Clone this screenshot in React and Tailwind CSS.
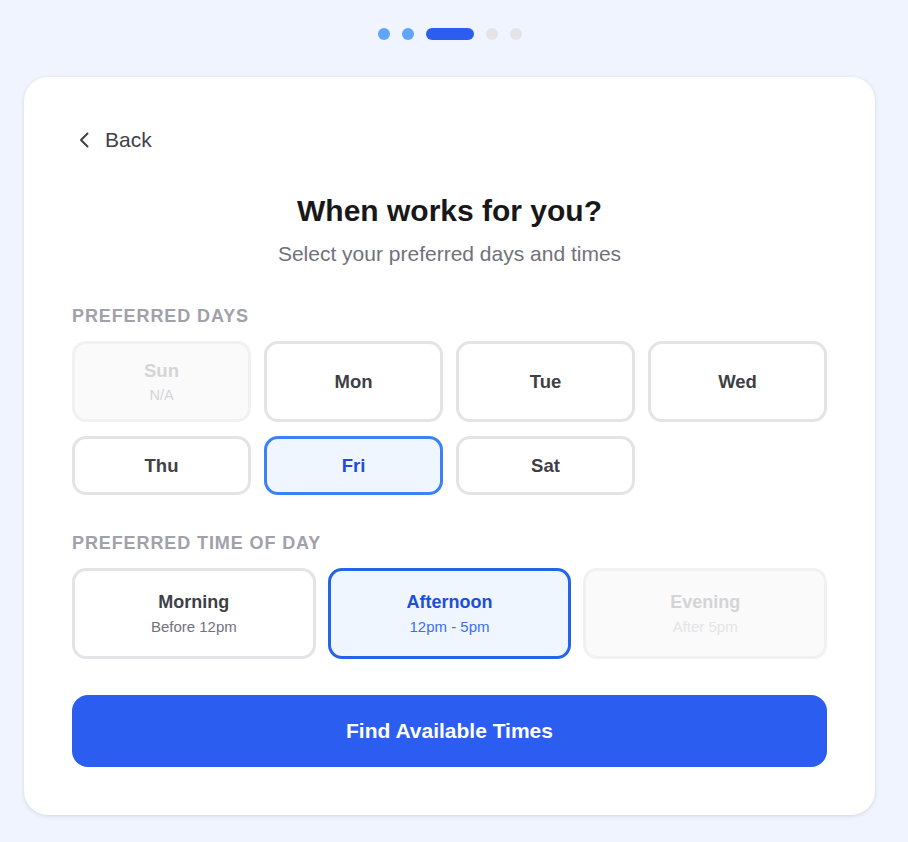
const DAYS = [
  { label: 'Sun', sub: 'N/A', disabled: true },
  { label: 'Mon' },
  { label: 'Tue' },
  { label: 'Wed' },
  { label: 'Thu' },
  { label: 'Fri', selected: true },
  { label: 'Sat' },
]

const TIMES = [
  { label: 'Morning', sub: 'Before 12pm' },
  { label: 'Afternoon', sub: '12pm - 5pm', selected: true },
  { label: 'Evening', sub: 'After 5pm', disabled: true },
]

function Steps() {
  return (
    <div className="flex items-center justify-center gap-3 pt-[28px] pb-[37px]">
      <span className="h-3 w-3 rounded-full bg-[#60a5fa]" />
      <span className="h-3 w-3 rounded-full bg-[#60a5fa]" />
      <span className="h-3 w-12 rounded-full bg-[#2b5ef0]" />
      <span className="h-3 w-3 rounded-full bg-[#e4e4e7]" />
      <span className="h-3 w-3 rounded-full bg-[#e4e4e7]" />
    </div>
  )
}

function DayCell({ day }) {
  const base = 'flex flex-col items-center justify-center rounded-[14px] border-[3px] py-[14px]'
  if (day.disabled) {
    return (
      <div className={`${base} border-[#f1f1f2] bg-[#fafafa]`}>
        <span className="text-[18.5px] font-bold leading-[25px] text-[#d4d4d8]">{day.label}</span>
        <span className="mt-[2px] text-[14.5px] leading-[20px] text-[#d4d4d8]">{day.sub}</span>
      </div>
    )
  }
  if (day.selected) {
    return (
      <div className={`${base} border-[#3b82f6] bg-[#eff6ff]`}>
        <span className="text-[18.5px] font-bold leading-[25px] text-[#1d4ed8]">{day.label}</span>
      </div>
    )
  }
  return (
    <div className={`${base} border-[#e4e4e7] bg-white`}>
      <span className="text-[18.5px] font-bold leading-[25px] text-[#3f3f46]">{day.label}</span>
    </div>
  )
}

function TimeCell({ t }) {
  const base = 'flex flex-col items-center justify-center rounded-[14px] border-[3px] h-[91px]'
  const tone = t.disabled
    ? 'border-[#f1f1f2] bg-[#fafafa]'
    : t.selected
      ? 'border-[#2563eb] bg-[#eff6ff]'
      : 'border-[#e4e4e7] bg-white'
  const title = t.disabled ? 'text-[#d4d4d8]' : t.selected ? 'text-[#1d4ed8]' : 'text-[#3f3f46]'
  const sub = t.disabled ? 'text-[#e4e4e7]' : t.selected ? 'text-[#3b6ef6]' : 'text-[#71717a]'
  return (
    <div className={`${base} ${tone}`}>
      <span className={`text-[18px] font-bold leading-[24px] ${title}`}>{t.label}</span>
      <span className={`mt-[3px] text-[15px] leading-[20px] ${sub}`}>{t.sub}</span>
    </div>
  )
}

export default function App() {
  return (
    <div className="min-h-[842px] bg-[#eff4fe] font-['Liberation_Sans',Arial,sans-serif]">
      <div className="w-[899px] px-6">
        <Steps />
        <div className="rounded-3xl bg-white px-12 pt-12 pb-12 shadow-[0_1px_4px_rgba(0,0,0,0.12)]">
          {/* Back link */}
          <div className="flex h-[30px] items-center text-[21px] text-[#3f3f46]">
            <svg width="12" height="16" viewBox="0 0 12 16" fill="none" className="ml-[6px] mr-[15px]">
              <path d="M9.5 1.5 L3 8 L9.5 14.5" stroke="currentColor" strokeWidth="2" strokeLinecap="round" strokeLinejoin="round" />
            </svg>
            <span>Back</span>
          </div>

          <h1 className="mt-[38px] text-center text-[30px] font-bold leading-[36px] text-[#18181b]">
            When works for you?
          </h1>
          <p className="mt-[11px] text-center text-[21px] leading-[28px] text-[#71717a]">
            Select your preferred days and times
          </p>

          {/* Days */}
          <div className="mt-[36px] text-[18px] font-bold uppercase leading-[24px] tracking-[0.05em] text-[#a1a1aa]">
            Preferred Days
          </div>
          <div className="mt-[13px] grid grid-cols-4 gap-x-[13px] gap-y-[14px]">
            {DAYS.map(d => (
              <DayCell key={d.label} day={d} />
            ))}
          </div>

          {/* Time of day */}
          <div className="mt-[36px] text-[18px] font-bold uppercase leading-[24px] tracking-[0.05em] text-[#a1a1aa]">
            Preferred Time of Day
          </div>
          <div className="mt-[13px] grid grid-cols-3 gap-3">
            {TIMES.map(t => (
              <TimeCell key={t.label} t={t} />
            ))}
          </div>

          <button className="mt-[36px] flex h-[72px] w-full items-center justify-center rounded-2xl bg-[#2b5ef0] text-[21px] font-bold text-white">
            Find Available Times
          </button>
        </div>
      </div>
    </div>
  )
}
